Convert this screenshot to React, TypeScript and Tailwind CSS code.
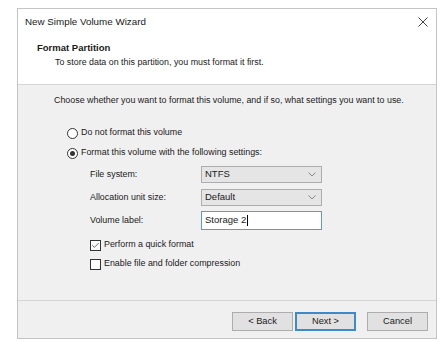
import { Check } from 'lucide-react';

const font = { fontFamily: "'Liberation Sans', Arial, sans-serif" };

function Radio({ checked, label }: { checked?: boolean; label: string }) {
  return (
    <div className="flex h-[14px] items-center">
      <span className="flex h-[11px] w-[11px] items-center justify-center rounded-full border border-[#333] bg-white">
        {checked && <span className="h-[5px] w-[5px] rounded-full bg-[#333]" />}
      </span>
      <span className="ml-[3px]">{label}</span>
    </div>
  );
}

function Box({ checked, label }: { checked?: boolean; label: string }) {
  return (
    <div className="flex h-[12px] items-center">
      <span className="flex h-[11px] w-[11px] items-center justify-center border border-[#333] bg-white">
        {checked && <Check className="h-[9px] w-[9px] text-[#333]" strokeWidth={2} />}
      </span>
      <span className="ml-[3px]">{label}</span>
    </div>
  );
}

function Combo({ value }: { value: string }) {
  return (
    <div className="flex h-[17px] w-[121px] items-center justify-between border border-[#adadad] bg-[#e5e5e5] pl-[3px] pr-[5px]">
      <span className="text-[9.5px]">{value}</span>
      <svg width="8" height="5" viewBox="0 0 8 5" className="text-[#888]">
        <path d="M0.5 0.5 L4 4 L7.5 0.5" fill="none" stroke="currentColor" strokeWidth="1" />
      </svg>
    </div>
  );
}

function Btn({ label, primary, className }: { label: string; primary?: boolean; className?: string }) {
  return (
    <div
      className={
        'flex h-[19px] w-[61px] items-center justify-center bg-[#e1e1e1] text-[9.3px] ' +
        (primary ? 'border-2 border-[#3c8ac9] ' : 'border border-[#adadad] ') +
        (className ?? '')
      }
    >
      {label}
    </div>
  );
}

export default function App() {
  return (
    <div className="h-[342px] w-[445px] whitespace-nowrap bg-white pl-[17px] pt-[8px] text-[8.9px] text-[#1a1a1a]" style={font}>
      <div className="flex h-[331px] w-[420px] flex-col border border-[#c4c4c4]">
        <div className="h-[76px] border-b border-[#d5d5d5] bg-white">
          <div className="flex h-[26px] items-center justify-between pl-[7px] pr-[8px]">
            <span className="text-[9.8px]">New Simple Volume Wizard</span>
            <svg width="10" height="10" viewBox="0 0 10 10">
              <path d="M0.5 0.5 L9.5 9.5 M9.5 0.5 L0.5 9.5" stroke="#444" strokeWidth="1" />
            </svg>
          </div>
          <div className="mt-[7px] h-[12px] pl-[19px] text-[9.5px] font-bold leading-[12px]">Format Partition</div>
          <div className="mt-[2px] h-[12px] pl-[37px] leading-[12px]">
            To store data on this partition, you must format it first.
          </div>
        </div>

        <div className="flex flex-1 flex-col bg-[#f0f0f0]">
          <div className="mt-[9px] h-[12px] pl-[36px] leading-[12px]">
            Choose whether you want to format this volume, and if so, what settings you want to use.
          </div>
          <div className="mt-[20px] pl-[49px]">
            <Radio label="Do not format this volume" />
          </div>
          <div className="mt-[6px] pl-[49px]">
            <Radio checked label="Format this volume with the following settings:" />
          </div>

          <div className="mt-[6px] grid grid-cols-[111px_121px] gap-y-[6px] pl-[72px]">
            <div className="flex items-center">File system:</div>
            <Combo value="NTFS" />
            <div className="flex items-center">Allocation unit size:</div>
            <Combo value="Default" />
            <div className="-mt-[1px] flex items-center">Volume label:</div>
            <div className="-mt-[1px] flex h-[19px] items-center border border-[#5a9bd6] bg-white pl-[3px] text-[9.5px]">
              Storage 2<span className="ml-px h-[11px] w-px bg-black" />
            </div>
          </div>

          <div className="mt-[9px] pl-[72px]">
            <Box checked label="Perform a quick format" />
          </div>
          <div className="mt-[7px] pl-[72px]">
            <Box label="Enable file and folder compression" />
          </div>

          <div className="flex-1" />

          <div className="flex h-[38px] justify-end border-t border-[#d5d5d5] pr-[8px] pt-[11px]">
            <Btn label="< Back" />
            <Btn label="Next >" primary className="ml-[2px]" />
            <Btn label="Cancel" className="ml-[11px]" />
          </div>
        </div>
      </div>
    </div>
  );
}
